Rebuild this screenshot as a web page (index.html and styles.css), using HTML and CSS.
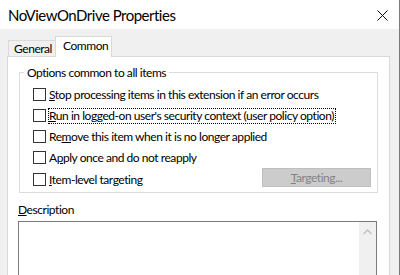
FILE: index.html
```html
<!DOCTYPE html>
<html lang="en">
<head>
  <meta charset="UTF-8" />
  <title>NoViewOnDrive Properties</title>
  <link rel="stylesheet" href="styles.css">
</head>
<body>
  <div class="window">

    <!-- Title bar -->
    <div class="titlebar">
      <span class="title">NoViewOnDrive Properties</span>
      <svg class="close" width="11" height="11" viewBox="0 0 11 11">
        <path d="M0.5 0.5 L10.5 10.5 M10.5 0.5 L0.5 10.5" stroke="#111" stroke-width="1" fill="none"/>
      </svg>
    </div>

    <div class="dialog">
      <!-- Tabs -->
      <div class="tabs">
        <div class="tab">General</div>
        <div class="tab active">Common</div>
      </div>

      <div class="panel">
        <fieldset class="group">
          <legend>Options common to all items</legend>
          <label class="row"><span class="box"></span><span><u>S</u>top processing items in this extension if an error occurs</span></label>
          <label class="row"><span class="box"></span><span class="focus"><u>R</u>un in logged-on user's security context (user policy option)</span></label>
          <label class="row"><span class="box"></span><span>Re<u>m</u>ove this item when it is no longer applied</span></label>
          <label class="row"><span class="box"></span><span>A<u>p</u>ply once and do not reapply</span></label>
          <div class="row last">
            <span class="box"></span><span><u>I</u>tem-level targeting</span>
            <button class="targeting" disabled><u>T</u>argeting...</button>
          </div>
        </fieldset>

        <div class="desc-label"><u>D</u>escription</div>
        <div class="desc">
          <div class="scroll">
            <svg width="9" height="6" viewBox="0 0 9 6">
              <path d="M0.5 5 L4.5 1 L8.5 5" stroke="#c2c2c2" stroke-width="1.5" fill="none"/>
            </svg>
          </div>
        </div>
      </div>
    </div>

  </div>
</body>
</html>
```

FILE: styles.css
```css
body {
  margin: 0;
  font-family: Lato, "Liberation Sans", sans-serif;
  font-size: 12px;
  letter-spacing: -0.45px;
  color: #000;
  overflow: hidden;
  white-space: nowrap;
}
.window {
  width: 399px;
  height: 275px;
  border-right: 1px solid #7a7a7a;
  background-color: #f0f0f0;
  overflow: hidden;
}
.titlebar {
  height: 29px;
  background-color: #fff;
  display: flex;
  align-items: center;
  justify-content: space-between;
  padding: 0 11px 0 8px;
}
.title {
  font-size: 15px;
  letter-spacing: -0.5px;
}
.close {
  margin-top: 1px;
}
.dialog {
  padding: 7px 9px 0 7px;
}
.tabs {
  display: flex;
  align-items: flex-end;
  height: 20px;
  padding-left: 1px;
  position: relative;
  z-index: 1;
}
.tab {
  box-sizing: border-box;
  width: 48px;
  height: 16px;
  line-height: 16px;
  padding: 0 0 0 5px;
  border: 1px solid #d9d9d9;
  border-bottom: none;
  background-color: #f0f0f0;
}
.tab.active {
  width: 57px;
  height: 21px;
  line-height: 18px;
  padding-left: 7px;
  margin-bottom: -1px;
  margin-left: -1px;
  background-color: #fff;
}
.panel {
  background-color: #fff;
  border: 1px solid #d9d9d9;
  height: 240px;
  padding: 0 11px 0 10px;
}
.group {
  margin: 8px 0 0 1px;
  padding: 4px 6px 5px 13px;
  border: 1px solid #dcdcdc;
  height: 117px;
}
.group legend {
  padding: 0 3px;
  margin-left: -9px;
}
.row {
  display: flex;
  align-items: center;
  height: 21px;
}
.box {
  width: 11px;
  height: 11px;
  border: 1px solid #333;
  margin-right: 3px;
  flex: none;
}
.focus {
  outline: 1px dotted #000;
  outline-offset: 0;
  line-height: 14px;
  padding-right: 1px;
}
.row.last {
  margin-top: 1px;
}
.targeting {
  margin-left: auto;
  width: 109px;
  height: 19px;
  margin-top: -4px;
  font-family: inherit;
  font-size: 12px;
  letter-spacing: inherit;
  color: #838383;
  background-color: #cccccc;
  border: 1px solid #bfbfbf;
  padding: 0;
}
.desc-label {
  margin: 9px 0 0 0;
  line-height: 16px;
}
.desc {
  margin-top: 3px;
  width: 357px;
  height: 60px;
  border: 1px solid #7a7a7a;
  display: flex;
  justify-content: flex-end;
}
.scroll {
  width: 17px;
  background-color: #f0f0f0;
  display: flex;
  justify-content: center;
  padding-top: 7px;
}
```
